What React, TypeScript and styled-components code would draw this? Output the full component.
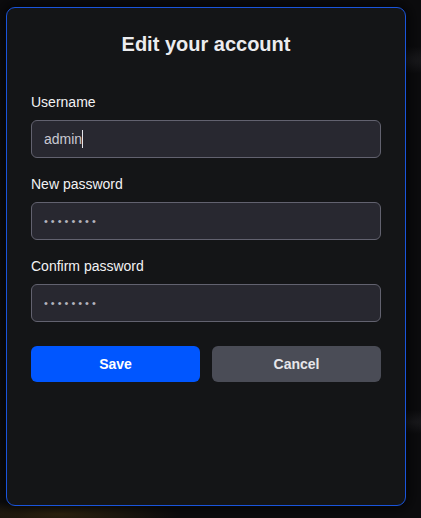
import { useState } from "react";
import styled, { createGlobalStyle } from "styled-components";

const GlobalStyle = createGlobalStyle`
  html, body {
    margin: 0;
    padding: 0;
    height: 100%;
  }

  body {
    background:
      radial-gradient(ellipse 60px 14px at 400px 60px, rgba(60, 60, 66, 0.35), transparent),
      radial-gradient(ellipse 50px 12px at 410px 422px, rgba(60, 60, 66, 0.3), transparent),
      radial-gradient(ellipse 120px 14px at 60px 514px, rgba(120, 86, 20, 0.35), transparent),
      #0c0c0e;
    font-family: "Liberation Sans", Arial, sans-serif;
  }

  #root {
    height: 100%;
  }
`;

const Backdrop = styled.div`
  box-sizing: border-box;
  height: 518px;
  padding: 7px 15px 12px 6px;
`;

const Modal = styled.form`
  box-sizing: border-box;
  width: 400px;
  height: 499px;
  padding: 24px;
  display: flex;
  flex-direction: column;

  background: #141517;
  border: 1px solid #1a55dc;
  border-radius: 9px;
  box-shadow: 0 0 14px 4px rgba(0, 0, 0, 0.6);
`;

const Title = styled.h2`
  margin: 0 0 36px;
  font-size: 20px;
  line-height: 24px;
  font-weight: 700;
  text-align: center;
  color: #ececef;
`;

const Field = styled.label`
  display: flex;
  flex-direction: column;
  gap: 8px;
  margin-bottom: 16px;
`;

const LabelText = styled.span`
  font-size: 14px;
  line-height: 20px;
  color: #f2f2f4;
`;

const InputBox = styled.div`
  position: relative;
`;

const Input = styled.input`
  box-sizing: border-box;
  display: block;
  height: 38px;
  padding: 0 12px;
  width: 100%;

  font-family: "Liberation Sans", Arial, sans-serif;
  font-size: 14px;
  color: #c9c9d2;
  caret-color: transparent;

  background: #282830;
  border: 1px solid #62626f;
  border-radius: 6px;
  outline: none;

  &[type="password"] {
    letter-spacing: 3px;
    font-size: 11px;
    color: #b4b4bd;
  }
`;

/* text caret drawn over the focused field */
const Caret = styled.span`
  position: absolute;
  top: 10px;
  left: 51px;
  width: 1px;
  height: 18px;
  background: #e4e4ea;
  pointer-events: none;
`;

const Actions = styled.div`
  display: grid;
  grid-template-columns: 1fr 1fr;
  gap: 12px;
  margin-top: 8px;
`;

const Button = styled.button<{ $variant: "primary" | "secondary" }>`
  height: 36px;
  border: none;
  border-radius: 6px;
  font-family: "Liberation Sans", Arial, sans-serif;
  font-size: 14px;
  font-weight: 700;
  color: ${({ $variant }) => ($variant === "primary" ? "#ffffff" : "#e6e6ea")};
  background: ${({ $variant }) => ($variant === "primary" ? "#0056ff" : "#4a4c56")};
  cursor: pointer;
`;

export default function App() {
  const [username, setUsername] = useState("admin");
  const [password, setPassword] = useState("password");
  const [confirm, setConfirm] = useState("password");

  return (
    <>
      <GlobalStyle />
      <Backdrop>
        <Modal onSubmit={(e) => e.preventDefault()}>
          <Title>Edit your account</Title>

          <Field>
            <LabelText>Username</LabelText>
            <InputBox>
              <Input
                autoFocus
                value={username}
                onChange={(e) => setUsername(e.target.value)}
              />
              <Caret />
            </InputBox>
          </Field>

          <Field>
            <LabelText>New password</LabelText>
            <Input
              type="password"
              value={password}
              onChange={(e) => setPassword(e.target.value)}
            />
          </Field>

          <Field>
            <LabelText>Confirm password</LabelText>
            <Input
              type="password"
              value={confirm}
              onChange={(e) => setConfirm(e.target.value)}
            />
          </Field>

          <Actions>
            <Button type="submit" $variant="primary">
              Save
            </Button>
            <Button type="button" $variant="secondary">
              Cancel
            </Button>
          </Actions>
        </Modal>
      </Backdrop>
    </>
  );
}
